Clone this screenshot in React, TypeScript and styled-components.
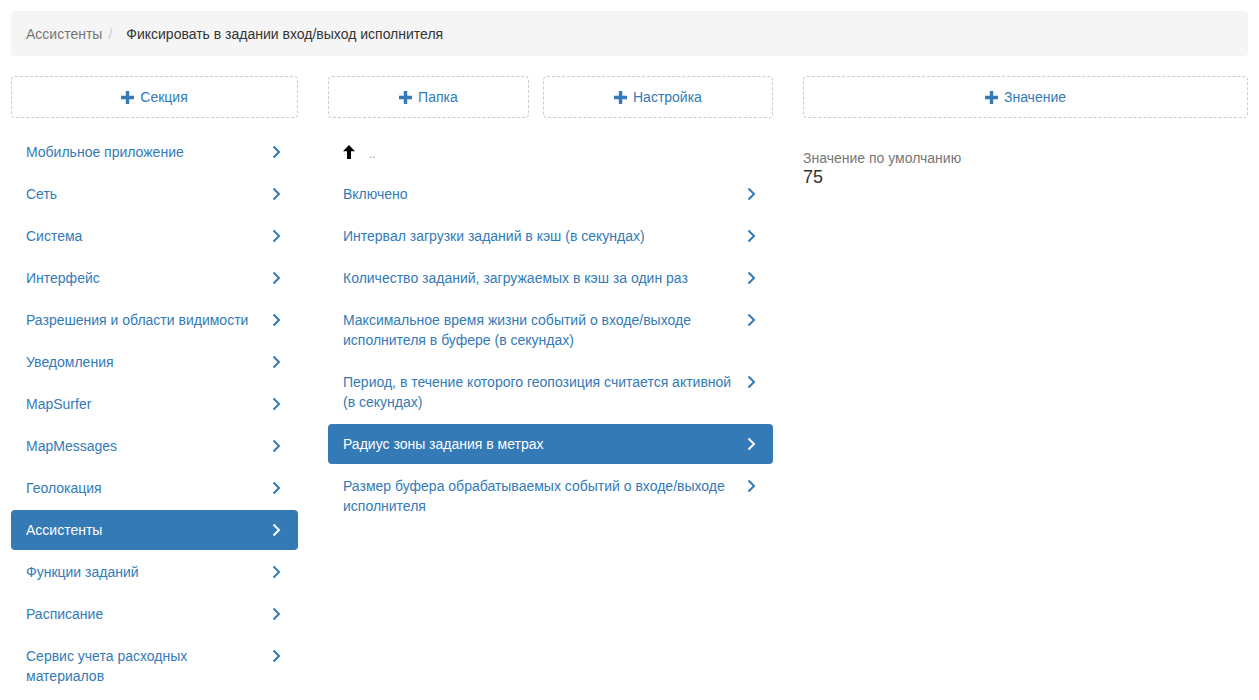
import React from 'react';
import styled, { createGlobalStyle } from 'styled-components';

const GlobalStyle = createGlobalStyle`
  html, body {
    margin: 0;
    padding: 0;
    background: #fff;
    font-family: "Liberation Sans", Arial, sans-serif;
    font-size: 14px;
    line-height: 20px;
    color: #333;
  }
  * {
    box-sizing: border-box;
  }
`;

const Page = styled.div`
  padding: 11px;
`;

const Breadcrumb = styled.div`
  height: 45px;
  background-color: #f5f5f5;
  border-radius: 4px;
  padding: 0 15px;
  display: flex;
  align-items: center;
  margin-bottom: 20px;
`;

const Crumb = styled.span<{ $active?: boolean }>`
  color: ${(p) => (p.$active ? '#333' : '#777')};
`;

const Divider = styled.span`
  color: #ccc;
  padding: 0 14px 0 6px;
`;

const Columns = styled.div`
  display: grid;
  grid-template-columns: minmax(0, 287fr) minmax(0, 445fr) minmax(0, 445fr);
  gap: 30px;
  align-items: start;
`;

const Column = styled.div`
  display: flex;
  flex-direction: column;
`;

const Buttons = styled.div`
  display: flex;
  gap: 14px;
  margin-bottom: 14px;
`;

const AddButton = styled.div`
  flex: 1 1 auto;
  height: 42px;
  border: 1px dashed #ccc;
  border-radius: 4px;
  display: flex;
  align-items: center;
  justify-content: center;
  gap: 6px;
  color: #337ab7;
  cursor: pointer;
`;

const List = styled.ul`
  list-style: none;
  margin: 0;
  padding: 0;
  display: flex;
  flex-direction: column;
  gap: 2px;
`;

const Item = styled.li<{ $active?: boolean }>`
  padding: 10px 15px;
  border-radius: 4px;
  color: ${(p) => (p.$active ? '#fff' : '#337ab7')};
  background-color: ${(p) => (p.$active ? '#337ab7' : 'transparent')};
  cursor: pointer;
`;

const Chevron = styled.span`
  float: right;
  margin: 0 2px 0 4px;
  height: 20px;
  display: flex;
  align-items: center;
`;

const UpRow = styled.li`
  height: 40px;
  padding: 0 15px;
  display: flex;
  align-items: center;
  gap: 14px;
  color: #999;
`;

const Dots = styled.span`
  font-size: 12px;
  line-height: 12px;
  margin-top: 4px;
`;

const Value = styled.div`
  padding-top: 17px;
`;

const ValueLabel = styled.div`
  color: #777;
  line-height: 18px;
`;

const ValueText = styled.div`
  font-size: 18px;
  line-height: 20px;
  color: #333;
`;

function Plus() {
  return (
    <svg width="13" height="13" viewBox="0 0 13 13">
      <path d="M4.8 0h3.4v4.8H13v3.4H8.2V13H4.8V8.2H0V4.8h4.8z" fill="#337ab7" />
    </svg>
  );
}

function ChevronIcon({ color }: { color: string }) {
  return (
    <svg width="10" height="14" viewBox="0 0 10 14">
      <polyline
        points="2.5,1.5 8,7 2.5,12.5"
        fill="none"
        stroke={color}
        strokeWidth="2"
        strokeLinecap="butt"
      />
    </svg>
  );
}

function ArrowUp() {
  return (
    <svg width="12" height="14" viewBox="0 0 12 14">
      <path d="M6 0L12 6.2H8V14H4V6.2H0z" fill="#000" />
    </svg>
  );
}

const sections = [
  'Мобильное приложение',
  'Сеть',
  'Система',
  'Интерфейс',
  'Разрешения и области видимости',
  'Уведомления',
  'MapSurfer',
  'MapMessages',
  'Геолокация',
  'Ассистенты',
  'Функции заданий',
  'Расписание',
  'Сервис учета расходных материалов',
];

const settings = [
  'Включено',
  'Интервал загрузки заданий в кэш (в секундах)',
  'Количество заданий, загружаемых в кэш за один раз',
  'Максимальное время жизни событий о входе/выходе исполнителя в буфере (в секундах)',
  'Период, в течение которого геопозиция считается активной (в секундах)',
  'Радиус зоны задания в метрах',
  'Размер буфера обрабатываемых событий о входе/выходе исполнителя',
];

export default function App() {
  return (
    <Page>
      <GlobalStyle />
      <Breadcrumb>
        <Crumb>Ассистенты</Crumb>
        <Divider>/</Divider>
        <Crumb $active>Фиксировать в задании вход/выход исполнителя</Crumb>
      </Breadcrumb>

      <Columns>
        <Column>
          <Buttons>
            <AddButton>
              <Plus />
              Секция
            </AddButton>
          </Buttons>
          <List>
            {sections.map((s) => {
              const active = s === 'Ассистенты';
              return (
                <Item key={s} $active={active}>
                  <Chevron>
                    <ChevronIcon color={active ? '#fff' : '#337ab7'} />
                  </Chevron>
                  {s}
                </Item>
              );
            })}
          </List>
        </Column>

        <Column>
          <Buttons>
            <AddButton>
              <Plus />
              Папка
            </AddButton>
            <AddButton>
              <Plus />
              Настройка
            </AddButton>
          </Buttons>
          <List>
            <UpRow>
              <ArrowUp />
              <Dots>..</Dots>
            </UpRow>
            {settings.map((s) => {
              const active = s === 'Радиус зоны задания в метрах';
              return (
                <Item key={s} $active={active}>
                  <Chevron>
                    <ChevronIcon color={active ? '#fff' : '#337ab7'} />
                  </Chevron>
                  {s}
                </Item>
              );
            })}
          </List>
        </Column>

        <Column>
          <Buttons>
            <AddButton>
              <Plus />
              Значение
            </AddButton>
          </Buttons>
          <Value>
            <ValueLabel>Значение по умолчанию</ValueLabel>
            <ValueText>75</ValueText>
          </Value>
        </Column>
      </Columns>
    </Page>
  );
}
